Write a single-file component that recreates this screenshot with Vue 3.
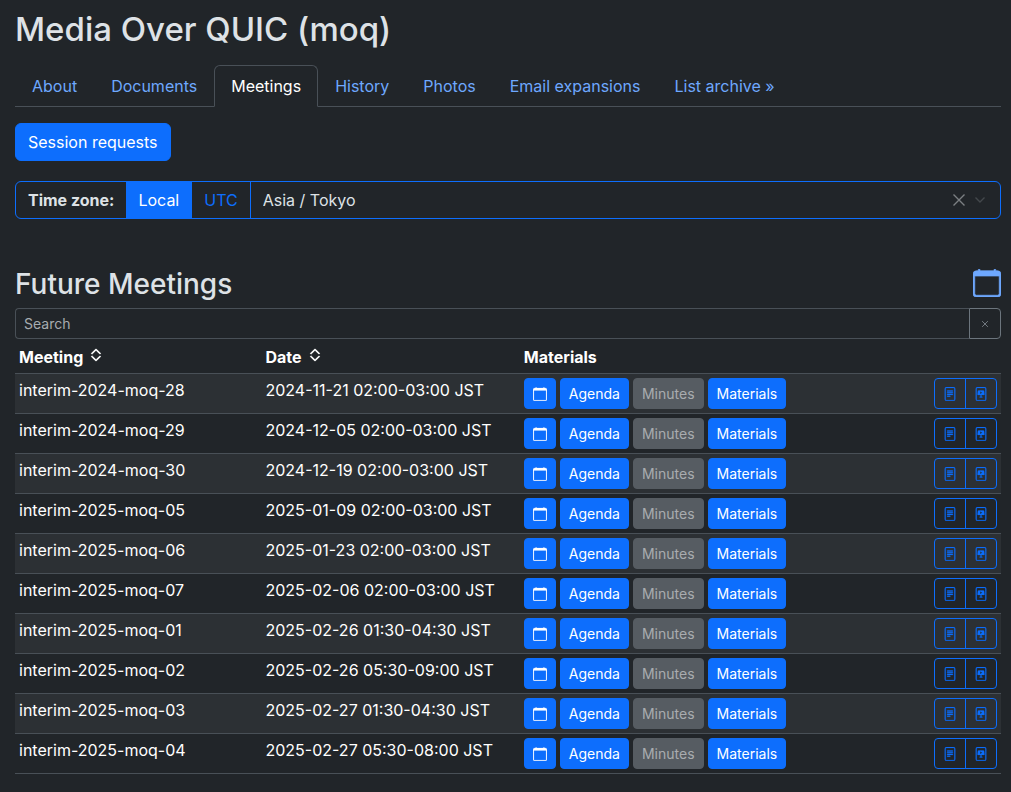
<script setup>
import { ref } from 'vue'

const tabs = ['About', 'Documents', 'Meetings', 'History', 'Photos', 'Email expansions', 'List archive »']
const zoneMode = ref('local')
const zone = ref('Asia / Tokyo')
const query = ref('')

const meetings = [
  ['interim-2024-moq-28', '2024-11-21 02:00-03:00 JST'],
  ['interim-2024-moq-29', '2024-12-05 02:00-03:00 JST'],
  ['interim-2024-moq-30', '2024-12-19 02:00-03:00 JST'],
  ['interim-2025-moq-05', '2025-01-09 02:00-03:00 JST'],
  ['interim-2025-moq-06', '2025-01-23 02:00-03:00 JST'],
  ['interim-2025-moq-07', '2025-02-06 02:00-03:00 JST'],
  ['interim-2025-moq-01', '2025-02-26 01:30-04:30 JST'],
  ['interim-2025-moq-02', '2025-02-26 05:30-09:00 JST'],
  ['interim-2025-moq-03', '2025-02-27 01:30-04:30 JST'],
  ['interim-2025-moq-04', '2025-02-27 05:30-08:00 JST'],
]

const calendar = 'M3.5 0a.5.5 0 0 1 .5.5V1h8V.5a.5.5 0 0 1 1 0V1h1a2 2 0 0 1 2 2v11a2 2 0 0 1-2 2H2a2 2 0 0 1-2-2V3a2 2 0 0 1 2-2h1V.5a.5.5 0 0 1 .5-.5M1 4v10a1 1 0 0 0 1 1h12a1 1 0 0 0 1-1V4z'
const expand = 'M3.646 9.146a.5.5 0 0 1 .708 0L8 12.793l3.646-3.647a.5.5 0 0 1 .708.708l-4 4a.5.5 0 0 1-.708 0l-4-4a.5.5 0 0 1 0-.708m0-2.292a.5.5 0 0 0 .708 0L8 3.207l3.646 3.647a.5.5 0 0 0 .708-.708l-4-4a.5.5 0 0 0-.708 0l-4 4a.5.5 0 0 0 0 .708'
const page = 'M2 2a2 2 0 0 1 2-2h8a2 2 0 0 1 2 2v12a2 2 0 0 1-2 2H4a2 2 0 0 1-2-2zm10-1H4a1 1 0 0 0-1 1v12a1 1 0 0 0 1 1h8a1 1 0 0 0 1-1V2a1 1 0 0 0-1-1'
const lines = 'M5 4a.5.5 0 0 0 0 1h6a.5.5 0 0 0 0-1zm-.5 2.5A.5.5 0 0 1 5 6h6a.5.5 0 0 1 0 1H5a.5.5 0 0 1-.5-.5M5 8a.5.5 0 0 0 0 1h6a.5.5 0 0 0 0-1zm0 2a.5.5 0 0 0 0 1h3a.5.5 0 0 0 0-1z'
const slides = 'M5 4a.5.5 0 0 0-.496.438l-.5 4A.5.5 0 0 0 4.5 9h3v2.016c-.863.055-1.5.251-1.5.484 0 .276.895.5 2 .5s2-.224 2-.5c0-.233-.637-.429-1.5-.484V9h3a.5.5 0 0 0 .496-.562l-.5-4A.5.5 0 0 0 11 4zm2 3.78V5.22c0-.096.106-.156.19-.106l2.13 1.279a.125.125 0 0 1 0 .214l-2.13 1.28A.125.125 0 0 1 7 7.778z'
</script>

<template>
  <main class="page">
    <h1>Media Over QUIC (moq)</h1>

    <nav class="tabs" aria-label="Group">
      <a v-for="tab in tabs" :key="tab" href="#" class="tab" :class="{ active: tab === 'Meetings' }">{{ tab }}</a>
    </nav>

    <a href="#" class="btn session">Session requests</a>

    <div class="zone">
      <label class="zone-label" for="zone-select">Time zone:</label>
      <label class="mode" :class="{ on: zoneMode === 'local' }">
        <input v-model="zoneMode" type="radio" name="mode" value="local">Local
      </label>
      <label class="mode" :class="{ on: zoneMode === 'utc' }">
        <input v-model="zoneMode" type="radio" name="mode" value="utc">UTC
      </label>
      <div class="picker">
        <select id="zone-select" v-model="zone">
          <option>Asia / Tokyo</option>
          <option>UTC</option>
        </select>
        <button type="button" class="clear-zone" aria-label="Clear time zone" @click="zone = 'UTC'">
          <svg viewBox="0 0 12 12" width="12" height="12"><path d="M0.5 0.5 11.5 11.5M11.5 0.5 0.5 11.5" /></svg>
        </button>
        <svg class="chevron" viewBox="0 0 10 6" width="10" height="6" aria-hidden="true"><path d="M0.5 0.5 5 5 9.5 0.5" /></svg>
      </div>
    </div>

    <header class="section-head">
      <h2>Future Meetings</h2>
      <a href="#" class="subscribe" aria-label="Calendar of future meetings">
        <svg viewBox="0 0 16 16" width="28" height="28"><path :d="calendar" /></svg>
      </a>
    </header>

    <div class="search">
      <input v-model="query" type="search" placeholder="Search" aria-label="Search">
      <button type="button" aria-label="Clear search" @click="query = ''">
        <svg viewBox="0 0 16 16" width="14" height="14"><path d="M4.7 4.7 11.3 11.3M11.3 4.7 4.7 11.3" /></svg>
      </button>
    </div>

    <table>
      <colgroup>
        <col class="c-meeting">
        <col class="c-date">
        <col>
        <col class="c-tools">
      </colgroup>
      <thead>
        <tr>
          <th scope="col"><span class="head">Meeting<svg class="sort" viewBox="0 0 16 16" width="16" height="16"><path :d="expand" /></svg></span></th>
          <th scope="col"><span class="head">Date<svg class="sort" viewBox="0 0 16 16" width="16" height="16"><path :d="expand" /></svg></span></th>
          <th scope="col" colspan="2">Materials</th>
        </tr>
      </thead>
      <tbody>
        <tr v-for="[name, date] in meetings" :key="name">
          <td>{{ name }}</td>
          <td>{{ date }}</td>
          <td>
            <div class="actions">
              <a href="#" class="btn small" aria-label="Add to calendar">
                <svg viewBox="0 0 16 16" width="14" height="14"><path :d="calendar" /></svg>
              </a>
              <a href="#" class="btn small">Agenda</a>
              <button type="button" class="btn small muted" disabled>Minutes</button>
              <a href="#" class="btn small">Materials</a>
            </div>
          </td>
          <td>
            <div class="tools">
              <a href="#" aria-label="Notes">
                <svg viewBox="0 0 16 16" width="14" height="14"><path :d="lines" /><path :d="page" /></svg>
              </a>
              <a href="#" aria-label="Slides">
                <svg viewBox="0 0 16 16" width="14" height="14"><path :d="slides" /><path :d="page" /></svg>
              </a>
            </div>
          </td>
        </tr>
      </tbody>
    </table>
  </main>
</template>

<style>
body {
  margin: 0;
  background: #212529;
}
</style>

<style scoped>
.page {
  padding: 8px 10px 18px 15px;
  color: #dee2e6;
  font: 400 16px/24px Inter, "Liberation Sans", sans-serif;
}
*,
*::before {
  box-sizing: border-box;
}
a {
  color: #6ea8fe;
  text-decoration: none;
}
svg {
  display: block;
  fill: currentColor;
}
input,
select,
button {
  font: inherit;
  margin: 0;
}
h1,
h2 {
  margin: 0;
  font-weight: 500;
}
h1 {
  font-size: 33px;
  line-height: 42px;
  margin-bottom: 15px;
}
h2 {
  font-size: 28px;
  line-height: 34px;
}
.tabs {
  display: flex;
  border-bottom: 1px solid #495057;
  margin-bottom: 16px;
}
.tab {
  padding: 8px 16px;
  border: 1px solid transparent;
  border-radius: 6px 6px 0 0;
  margin-bottom: -1px;
}
.tab.active {
  color: #fff;
  background: #212529;
  border-color: #495057 #495057 #212529;
}
.btn {
  display: inline-block;
  padding: 6px 12px;
  border: 1px solid #0d6efd;
  border-radius: 6px;
  background: #0d6efd;
  color: #fff;
}
.session {
  display: block;
  width: fit-content;
  margin-bottom: 20px;
}
.zone {
  display: flex;
  border: 1px solid #0d6efd;
  border-radius: 6px;
  height: 38px;
  line-height: 36px;
  margin-bottom: 48px;
}
.zone-label {
  font-weight: 700;
  padding: 0 12px;
}
.mode {
  padding: 0 12px;
  color: #0d6efd;
  border-right: 1px solid #0d6efd;
  position: relative;
}
.mode.on {
  background: #0d6efd;
  color: #fff;
}
.mode input {
  position: absolute;
  opacity: 0;
  pointer-events: none;
}
.picker {
  flex: 1;
  display: flex;
  align-items: center;
  padding-right: 15px;
}
.picker select {
  flex: 1;
  height: 100%;
  appearance: none;
  border: 0;
  padding: 0 12px;
  background: transparent;
  color: #dee2e6;
}
.clear-zone {
  border: 0;
  padding: 0;
  background: transparent;
  color: #7b7f83;
  margin-right: 10px;
}
.picker path,
.search path {
  fill: none;
  stroke: currentColor;
}
.picker path {
  stroke-width: 1.4;
}
.chevron {
  color: #43484c;
}
.section-head {
  display: flex;
  align-items: center;
  justify-content: space-between;
  margin-bottom: 7px;
}
.subscribe {
  padding-bottom: 2px;
}
.subscribe path {
  stroke: currentColor;
  stroke-width: 0.4;
}
.search {
  display: flex;
  height: 31px;
  margin-bottom: 1px;
}
.search input {
  flex: 1;
  min-width: 0;
  appearance: none;
  border: 1px solid #495057;
  border-right: 0;
  border-radius: 4px 0 0 4px;
  padding: 0 8px;
  background: #212529;
  color: #dee2e6;
  font-size: 14px;
}
.search input::placeholder {
  color: #a7acb0;
  opacity: 1;
}
.search button {
  padding: 0 8px;
  border: 1px solid #6c757d;
  border-radius: 0 4px 4px 0;
  background: transparent;
  color: #7d858c;
}
table {
  width: 100%;
  border-collapse: separate;
  border-spacing: 0;
  table-layout: fixed;
  color: #fff;
}
.c-meeting {
  width: 25%;
}
.c-date {
  width: 26.2%;
}
.c-tools {
  width: 72px;
}
th,
td {
  padding: 4px;
  border-bottom: 1px solid #495057;
  text-align: left;
  vertical-align: top;
}
th {
  font-weight: 700;
  padding-top: 5px;
}
tbody tr:nth-child(odd) {
  background: #2c3034;
}
.head {
  display: flex;
  gap: 5px;
}
.sort {
  margin-top: 2px;
  stroke: currentColor;
  stroke-width: 1;
}
.actions {
  display: flex;
  gap: 4px;
}
.small {
  height: 31px;
  padding: 4px 8px;
  border-radius: 4px;
  font-size: 14px;
  line-height: 21px;
}
.small svg,
.tools svg {
  margin: 4px 0;
}
.small path {
  stroke: currentColor;
  stroke-width: 0.2;
}
.muted {
  background: #565c62;
  border-color: #565c62;
  color: #a9acaf;
}
.tools {
  display: flex;
  justify-content: flex-end;
}
.tools a {
  padding: 4px 8px;
  height: 31px;
  border: 1px solid #0d6efd;
  border-radius: 4px 0 0 4px;
  color: #0d6efd;
}
.tools path {
  stroke: currentColor;
  stroke-width: 0.3;
}
.tools a + a {
  margin-left: -1px;
  border-radius: 0 4px 4px 0;
}
</style>
